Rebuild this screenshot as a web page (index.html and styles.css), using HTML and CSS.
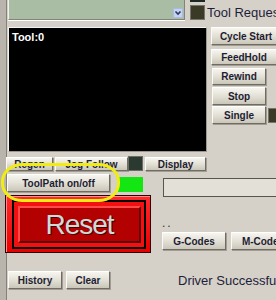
FILE: index.html
```html
<!DOCTYPE html>
<html lang="en">

<head>
    <meta charset="UTF-8">
    <meta name="viewport" content="width=device-width, initial-scale=1.0">
    <title>Program Run</title>
    <link rel="stylesheet" href="styles.css">
</head>

<body>
    <div class="screen">
        <!-- top: file list, leds, tool request -->
        <div class="top-row">
            <div class="listbox">
                <svg class="drop" viewBox="0 0 10 10">
                    <rect x="0.5" y="0.5" width="9" height="9" fill="#c5d3f1" stroke="#aabbe2" />
                    <path d="M2.5 3.5 L5 6 L7.5 3.5" stroke="#2b3566" stroke-width="1.6" fill="none" />
                </svg>
            </div>
            <div class="led-stack">
                <span class="led led-dark"></span>
                <span class="led led-olive"></span>
            </div>
            <div class="tool-label">Tool Request</div>
        </div>

        <!-- toolpath display + cycle buttons -->
        <div class="mid-row">
            <div class="toolpath-view">Tool:0</div>
            <div class="cycle-col">
                <button class="btn cycle">Cycle Start</button>
                <button class="btn feed">FeedHold</button>
                <button class="btn small rewind">Rewind</button>
                <button class="btn small stop">Stop</button>
                <div class="single-row">
                    <button class="btn single">Single</button>
                    <span class="led led-olive single-led"></span>
                </div>
            </div>
        </div>

        <div class="view-row">
            <button class="btn regen">Regen</button>
            <button class="btn jog">Jog Follow</button>
            <span class="led led-jog"></span>
            <button class="btn display">Display</button>
        </div>

        <div class="bottom">
            <div class="bottom-left">
                <div class="toolpath-row">
                    <button class="btn toolpath">ToolPath on/off</button>
                    <span class="led led-green"></span>
                </div>
                <div class="reset">
                    <div class="reset-ring">
                        <div class="reset-face">Reset</div>
                    </div>
                </div>
                <div class="history-row">
                    <button class="btn history">History</button>
                    <button class="btn clear">Clear</button>
                </div>
            </div>
            <div class="bottom-right">
                <div class="mdi-input"></div>
                <div class="dots">..</div>
                <div class="code-row">
                    <button class="btn gcodes">G-Codes</button>
                    <button class="btn mcodes">M-Codes</button>
                </div>
                <div class="status-msg">Driver Successful</div>
            </div>
        </div>

        <!-- yellow marker drawn over the ToolPath button -->
        <svg class="highlight" viewBox="0 0 119 39">
            <rect x="1.5" y="1.5" width="116" height="36" rx="20" ry="17" fill="none" stroke="#f1ec14" stroke-width="3" />
        </svg>
    </div>
</body>

</html>
```

FILE: styles.css
```css
body {
    margin: 0;
    padding: 0;
    font-family: 'Liberation Sans', Arial, sans-serif;
    background: linear-gradient(to right, #b9b5ad 0 6px, #84817a 6px 7px, #d5d1c9 7px);
    overflow: hidden;
}

.screen {
    position: relative;
    width: 276px;
    height: 300px;
    padding-left: 5px;
    box-sizing: border-box;
    overflow: hidden;
}

/* ---------- top ---------- */

.top-row {
    display: flex;
    height: 27px;
}

.listbox {
    flex: none;
    margin-left: 3px;
    width: 177px;
    height: 20px;
    box-sizing: border-box;
    background-color: #a9bda5;
    border-left: 1px solid #f2f0ea;
    border-right: 1px solid #85827a;
    border-bottom: 1px solid #85827a;
    box-shadow: 0 1px 0 #ffffff;
    display: flex;
    justify-content: flex-end;
    align-items: flex-end;
    padding: 0 1px 1px 0;
}

.drop {
    width: 10px;
    height: 10px;
    display: block;
}

.led-stack {
    flex: none;
    margin-left: 5px;
    width: 15px;
    display: flex;
    flex-direction: column;
}

.led {
    display: block;
    box-sizing: border-box;
    flex: none;
}

.led-dark {
    height: 2px;
    background-color: #1e2822;
}

.led-olive {
    margin-top: 3px;
    height: 15px;
    background-color: #3b3a27;
    border: 1px solid #77746a;
}

.tool-label {
    margin-left: 2px;
    padding-top: 5px;
    font-size: 13px;
    line-height: 15px;
    color: #1e1d3a;
    white-space: nowrap;
}

/* ---------- buttons ---------- */

.btn {
    flex: none;
    box-sizing: border-box;
    margin: 0;
    padding: 0;
    font-family: 'Liberation Sans', Arial, sans-serif;
    font-weight: bold;
    font-size: 10px;
    color: #1d1d33;
    white-space: nowrap;
    background: linear-gradient(#f6f5ef, #e3e0d6 50%, #cac6b9);
    border: 1px solid;
    border-color: #ffffff #6f6c64 #6f6c64 #fbfaf5;
    box-shadow: 1px 1px 0 #a19d93;
    display: flex;
    align-items: center;
    justify-content: center;
}

/* ---------- middle ---------- */

.mid-row {
    display: flex;
    height: 125px;
}

.toolpath-view {
    flex: none;
    margin-left: 3px;
    width: 199px;
    height: 125px;
    box-sizing: border-box;
    background-color: #000;
    border: 1px solid;
    border-color: #f4f2ec #9c988f #9c988f #f4f2ec;
    color: #fff;
    font-weight: bold;
    font-size: 11px;
    line-height: 13px;
    padding: 3px 3px;
}

.cycle-col {
    margin-left: 4px;
    display: flex;
    flex-direction: column;
    align-items: flex-start;
}

.cycle {
    width: 70px;
    height: 18px;
}

.feed {
    margin-top: 4px;
    width: 66px;
    height: 16px;
}

.small {
    margin-left: 1px;
    width: 54px;
}

.rewind {
    margin-top: 3px;
    height: 17px;
}

.stop {
    margin-top: 2px;
    height: 18px;
}

.single-row {
    margin-top: 1px;
    margin-left: 1px;
    display: flex;
}

.single {
    width: 54px;
    height: 18px;
}

.single-led {
    margin: 2px 0 0 2px;
    width: 10px;
}

/* ---------- view buttons ---------- */

.view-row {
    display: flex;
    margin-top: 5px;
    height: 14px;
}

.regen {
    margin-left: 1px;
    width: 47px;
}

.jog {
    margin-left: 2px;
    width: 73px;
}

.led-jog {
    width: 15px;
    height: 15px;
    margin-top: -1px;
    background-color: #2b3a30;
    border: 1px solid #6d6b62;
}

.display {
    margin-left: 2px;
    width: 61px;
}

/* ---------- bottom ---------- */

.bottom {
    display: flex;
    margin-top: 3px;
}

.bottom-left {
    flex: none;
    width: 146px;
    display: flex;
    flex-direction: column;
}

.toolpath-row {
    display: flex;
    height: 18px;
}

.toolpath {
    margin-left: 2px;
    width: 103px;
    height: 18px;
}

.led-green {
    margin: 3px 0 0 8px;
    width: 25px;
    height: 15px;
    background-color: #14e614;
}

.reset {
    margin-top: 3px;
    width: 146px;
    height: 58px;
    box-sizing: border-box;
    padding: 4px 4px 3px 6px;
    background: linear-gradient(#ff2a2a, #e80000);
    border: 1px solid #300000;
    box-shadow: inset 1px 1px 0 #ff9090;
}

.reset-ring {
    height: 100%;
    box-sizing: border-box;
    border: 2px solid #000;
    background-color: #f21010;
    padding: 4px 3px 4px 4px;
}

.reset-face {
    height: 100%;
    box-sizing: border-box;
    background-color: #b30000;
    border: 2px solid;
    border-color: #ff4a4a #5a0000 #5a0000 #ff4a4a;
    display: flex;
    align-items: center;
    justify-content: center;
    font-size: 28px;
    letter-spacing: -1px;
    color: #c9dcda;
    text-shadow: 1px 1px 0 #4a0000;
}

.history-row {
    display: flex;
    margin-top: 18px;
}

.history {
    margin-left: 3px;
    width: 54px;
    height: 18px;
}

.clear {
    margin-left: 4px;
    width: 44px;
    height: 18px;
}

.bottom-right {
    margin-left: 11px;
    display: flex;
    flex-direction: column;
}

.mdi-input {
    margin: 4px 0 0 1px;
    width: 120px;
    height: 19px;
    box-sizing: border-box;
    background-color: #e3e0d7;
    border: 1px solid #57554f;
}

.dots {
    margin-top: 20px;
    height: 12px;
    font-size: 12px;
    line-height: 12px;
    letter-spacing: 2px;
    color: #333;
}

.code-row {
    display: flex;
    margin-top: 3px;
    height: 18px;
}

.gcodes {
    width: 64px;
}

.mcodes {
    margin-left: 5px;
    width: 64px;
}

.status-msg {
    margin: 23px 0 0 16px;
    font-size: 13px;
    line-height: 15px;
    color: #1e1d3a;
    white-space: nowrap;
}

/* marker over the ToolPath row */
.highlight {
    position: absolute;
    left: 1px;
    top: 163px;
    width: 119px;
    height: 39px;
}
```
